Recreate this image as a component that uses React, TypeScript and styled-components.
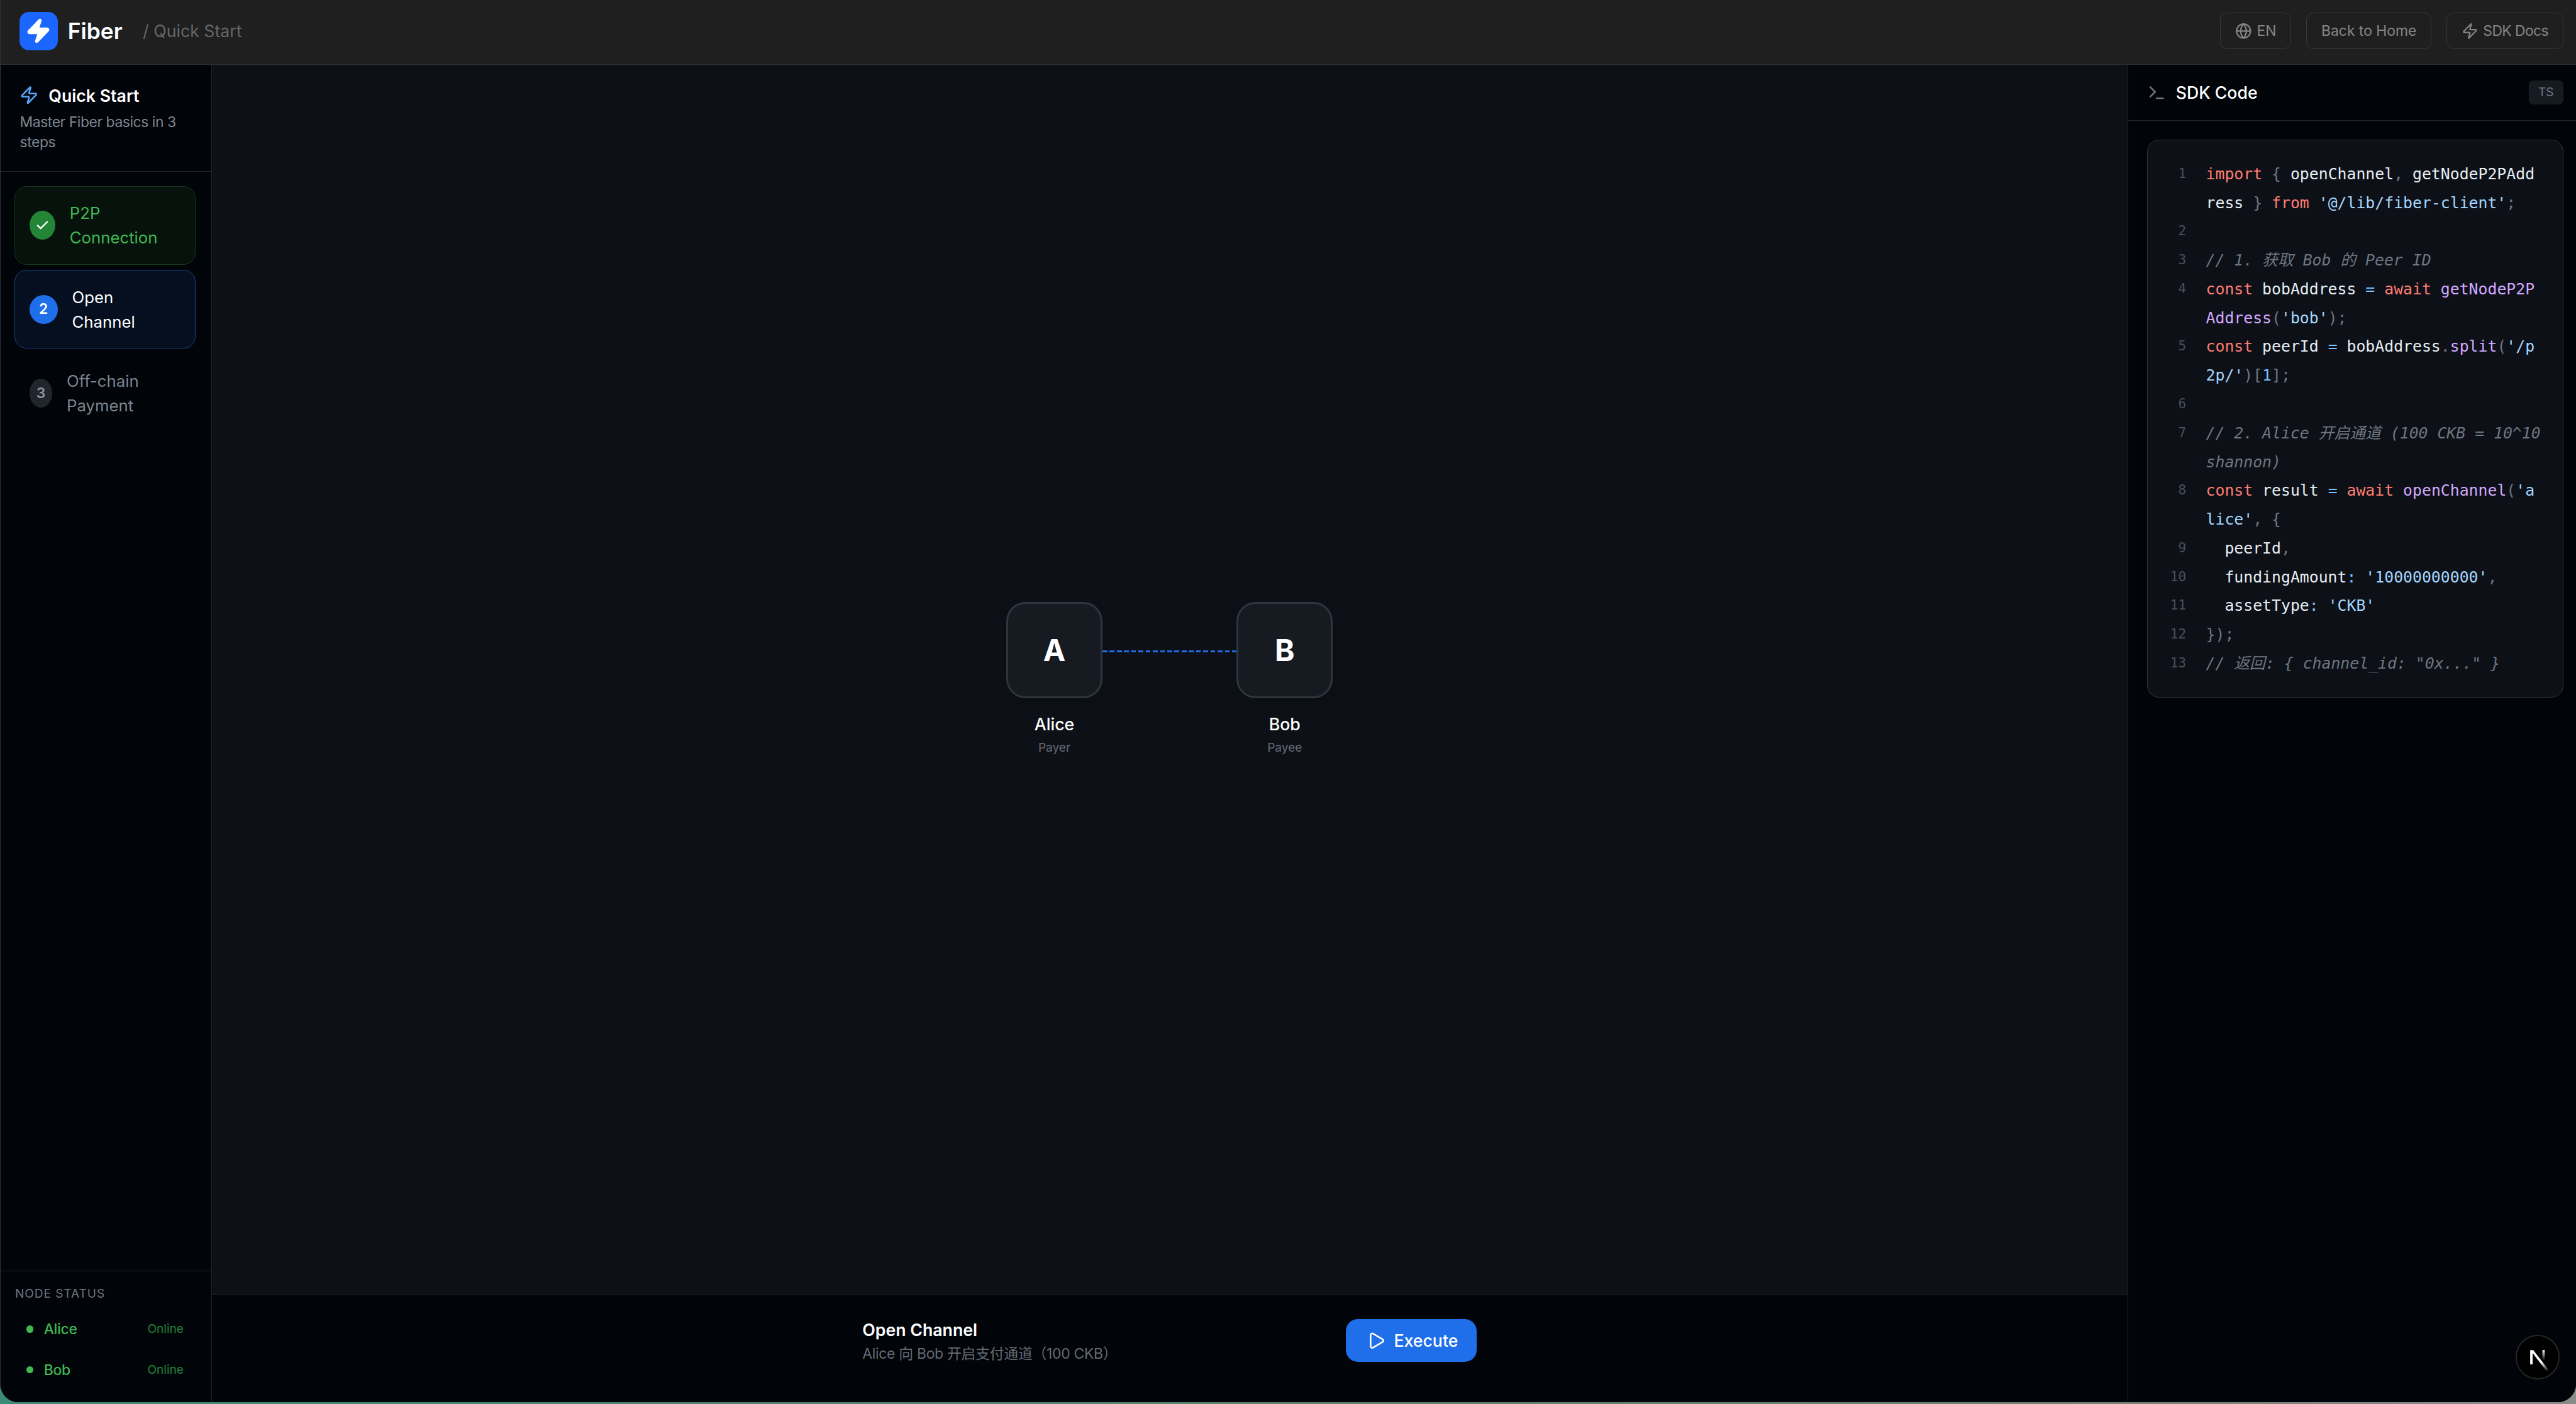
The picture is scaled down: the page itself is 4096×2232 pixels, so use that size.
import React from 'react';
import styled, { createGlobalStyle } from 'styled-components';
import { Check, Globe, Play, Terminal, Zap } from 'lucide-react';

const Global = createGlobalStyle`
  html, body { margin: 0; padding: 0; background: #3f7f70; overflow: hidden; }
  * { box-sizing: border-box; }
`;

const Page = styled.div`
  width: 4294px;
  height: 2340px;
  zoom: 0.95390;
  font-family: Inter, "Noto Sans CJK SC", sans-serif;
  background: linear-gradient(90deg, #3d8a78 0%, #4d8272 25%, #5e806c 55%, #6d7f72 80%, #8b8b88 100%);
`;
const Frame = styled.div`
  position: relative;
  height: 2337px;
  display: flex;
  flex-direction: column;
  overflow: hidden;
  border-left: 1px solid #30343a;
  border-radius: 0 0 30px 30px;
  background: #010409;
`;
const Header = styled.header`
  flex: none;
  height: 108px;
  display: flex;
  align-items: center;
  justify-content: space-between;
  padding: 0 21px 4px 31px;
  background: #1f1f1f;
  border-bottom: 2px solid #2f2f2f;
`;
const Brand = styled.div`
  display: flex;
  align-items: center;
`;
const Logo = styled.div`
  width: 64px;
  height: 64px;
  border-radius: 16px;
  background: #1a66ff;
  color: #fff;
  display: flex;
  align-items: center;
  justify-content: center;
`;
const BrandName = styled.span`
  margin-left: 17px;
  font-size: 37px;
  font-weight: 600;
  color: #fff;
`;
const Crumb = styled.span`
  margin-left: 34px;
  font-size: 28px;
  color: #666;
`;
const HeaderActions = styled.div`
  display: flex;
  gap: 25px;
`;
const HeaderButton = styled.div<{ $tight?: boolean }>`
  height: 60px;
  padding: 0 24px;
  display: flex;
  align-items: center;
  gap: 8px;
  border: 2px solid #383838;
  border-radius: 12px;
  color: #858585;
  font-size: 24px;
  letter-spacing: ${(p) => (p.$tight ? '-0.6px' : '0')};
`;
const Body = styled.div`
  flex: 1;
  min-height: 0;
  display: flex;
`;
const Sidebar = styled.aside`
  flex: none;
  width: 352px;
  display: flex;
  flex-direction: column;
  background: #010409;
  border-right: 2px solid #21262d;
`;
const SidebarHead = styled.div`
  height: 178px;
  padding: 31px 32px 0;
  border-bottom: 2px solid #21262d;
`;
const SidebarTitle = styled.div`
  display: flex;
  align-items: center;
  gap: 17px;
  height: 40px;
  margin-left: -1px;
  color: #fff;
  font-size: 28px;
  font-weight: 600;
  svg { color: #58a6ff; }
`;
const SidebarSub = styled.p`
  margin: 9px 0 0;
  font-size: 24px;
  line-height: 33px;
  letter-spacing: -0.45px;
  color: #7d8590;
`;
const Steps = styled.div`
  flex: 1;
  padding: 24px 26px 0 23px;
  display: flex;
  flex-direction: column;
  gap: 9px;
`;
const tones = {
  done: { bg: '#07120d', line: '#14361c', text: '#3fb950', dot: '#238636', num: '#fff' },
  active: { bg: '#050f20', line: '#1a4488', text: '#ffffff', dot: '#1f6feb', num: '#fff' },
  idle: { bg: 'transparent', line: 'transparent', text: '#7d8590', dot: '#21262d', num: '#8b949e' },
};
type Tone = keyof typeof tones;
const Step = styled.div<{ $tone: Tone }>`
  height: 131px;
  padding: 0 24px;
  display: flex;
  align-items: center;
  gap: 24px;
  border: 2px solid ${(p) => tones[p.$tone].line};
  border-radius: 20px;
  background: ${(p) => tones[p.$tone].bg};
  color: ${(p) => tones[p.$tone].text};
  font-size: 27px;
  line-height: 41px;
`;
const StepDot = styled.div<{ $tone: Tone; $width: number }>`
  flex: none;
  width: ${(p) => p.$width}px;
  height: 48px;
  border-radius: 50%;
  display: flex;
  align-items: center;
  justify-content: center;
  background: ${(p) => tones[p.$tone].dot};
  color: ${(p) => tones[p.$tone].num};
  font-size: 24px;
  font-weight: 600;
`;
const StepLabel = styled.div`
  width: 170px;
`;
const NodeStatus = styled.div`
  flex: none;
  height: 219px;
  padding: 26px 46px 0 24px;
  border-top: 2px solid #21262d;
`;
const StatusTitle = styled.div`
  font-size: 20px;
  line-height: 24px;
  letter-spacing: 1px;
  color: #6e7681;
  margin-bottom: 12px;
`;
const StatusRow = styled.div`
  height: 68px;
  padding-left: 19px;
  display: flex;
  align-items: center;
  color: #3fb950;
  font-size: 24px;
  font-weight: 500;
  letter-spacing: -0.3px;
`;
const StatusDot = styled.span`
  width: 12px;
  height: 12px;
  margin-right: 17px;
  border-radius: 50%;
  background: #3fb950;
`;
const StatusState = styled.span`
  margin-left: auto;
  font-size: 20px;
  font-weight: 400;
  letter-spacing: 0;
  color: #238636;
`;
const Main = styled.main`
  flex: 1;
  min-width: 0;
  display: flex;
  flex-direction: column;
`;
const Canvas = styled.div`
  flex: 1;
  display: flex;
  align-items: center;
  justify-content: center;
  background: #0d1117;
`;
const NodeGraph = styled.div`
  display: flex;
  align-items: flex-start;
`;
const NodeColumn = styled.div`
  width: 160px;
  display: flex;
  flex-direction: column;
  align-items: center;
`;
const NodeBox = styled.div`
  width: 160px;
  height: 160px;
  display: flex;
  align-items: center;
  justify-content: center;
  background: #161b22;
  border: 4px solid #30363d;
  border-radius: 32px;
  box-shadow: 0 8px 20px rgba(0, 0, 0, 0.12);
  color: #fff;
  font-size: 50px;
  font-weight: 700;
`;
const NodeName = styled.div`
  margin-top: 25px;
  font-size: 28px;
  line-height: 36px;
  font-weight: 500;
  color: #fff;
`;
const NodeRole = styled.div`
  margin-top: 8px;
  font-size: 20px;
  line-height: 28px;
  color: #646b75;
`;
const Link = styled.div`
  width: 224px;
  height: 4px;
  margin-top: 80px;
  background: repeating-linear-gradient(90deg, #1f6feb 0 8px, transparent 8px 12px);
`;
const ActionBar = styled.div`
  flex: none;
  height: 181px;
  padding-top: 39px;
  display: flex;
  align-items: flex-start;
  justify-content: center;
  background: #010409;
  border-top: 2px solid #21262d;
`;
const ActionInner = styled.div`
  width: 1024px;
  display: flex;
  align-items: center;
  justify-content: space-between;
`;
const ActionTitle = styled.div`
  font-size: 28px;
  line-height: 40px;
  font-weight: 600;
  color: #fff;
`;
const ActionSub = styled.div`
  font-size: 24px;
  line-height: 32px;
  margin-top: 4px;
  letter-spacing: -0.3px;
  color: #646b75;
`;
const Execute = styled.div`
  width: 218px;
  height: 72px;
  padding-left: 34px;
  display: flex;
  align-items: center;
  gap: 14px;
  border-radius: 20px;
  background: #1f6feb;
  color: #fff;
  font-size: 28px;
  font-weight: 500;
`;
const CodePanel = styled.aside`
  flex: none;
  width: 748px;
  display: flex;
  flex-direction: column;
  background: #010409;
  border-left: 2px solid #21262d;
`;
const CodeHead = styled.div`
  flex: none;
  height: 93px;
  padding: 0 21px 0 32px;
  display: flex;
  align-items: center;
  border-bottom: 2px solid #21262d;
  color: #fff;
  font-size: 28px;
  font-weight: 500;
  svg { color: #6e7681; margin-right: 16px; }
`;
const Badge = styled.div`
  margin-left: auto;
  width: 58px;
  height: 40px;
  display: flex;
  align-items: center;
  justify-content: center;
  border: 2px solid #21262d;
  border-radius: 8px;
  background: #161b22;
  color: #6e7681;
  font-size: 20px;
  font-weight: 400;
`;
const CodeCard = styled.div`
  margin: 32px 21px 0 32px;
  padding: 32px;
  background: #0d1117;
  border: 2px solid #30363d;
  border-radius: 20px;
  font-family: "DejaVu Sans Mono", "Noto Sans CJK SC", monospace;
  font-size: 26px;
  line-height: 48px;
`;
const CodeRow = styled.div`
  display: flex;
  min-height: 48px;
`;
const LineNo = styled.span`
  flex: none;
  width: 32px;
  margin-right: 33px;
  text-align: right;
  font-size: 22px;
  color: #484f58;
`;
const CodeText = styled.span`
  flex: 1;
  min-width: 0;
  white-space: pre-wrap;
  word-break: break-all;
  color: #e6edf3;
`;
const Kw = styled.span`color: #ff7b72;`;
const Str = styled.span`color: #a5d6ff;`;
const Fn = styled.span`color: #d2a8ff;`;
const Op = styled.span`color: #79c0ff;`;
const Pn = styled.span`color: #6e7681;`;
const Cm = styled.span`color: #6e7681; font-style: italic;`;
const DevBadge = styled.div`
  position: absolute;
  right: 27px;
  bottom: 38px;
  width: 74px;
  height: 74px;
  display: flex;
  align-items: center;
  justify-content: center;
  border-radius: 50%;
  background: #000;
  border: 3px solid #262626;
`;

const code: React.ReactNode[] = [
  <><Kw>import</Kw> <Pn>{'{'}</Pn> openChannel<Pn>,</Pn> getNodeP2PAddress <Pn>{'}'}</Pn> <Kw>from</Kw> <Str>'@/lib/fiber-client'</Str><Pn>;</Pn></>,
  '',
  <Cm>// 1. 获取 Bob 的 Peer ID</Cm>,
  <><Kw>const</Kw> bobAddress <Op>=</Op> <Kw>await</Kw> <Fn>getNodeP2PAddress</Fn><Pn>(</Pn><Str>'bob'</Str><Pn>);</Pn></>,
  <><Kw>const</Kw> peerId <Op>=</Op> bobAddress<Pn>.</Pn><Fn>split</Fn><Pn>(</Pn><Str>'/p2p/'</Str><Pn>)[</Pn><Op>1</Op><Pn>];</Pn></>,
  '',
  <Cm>// 2. Alice 开启通道 (100 CKB = 10^10 shannon)</Cm>,
  <><Kw>const</Kw> result <Op>=</Op> <Kw>await</Kw> <Fn>openChannel</Fn><Pn>(</Pn><Str>'alice'</Str><Pn>,</Pn> <Pn>{'{'}</Pn></>,
  <>  peerId<Pn>,</Pn></>,
  <>  fundingAmount<Op>:</Op> <Str>'10000000000'</Str><Pn>,</Pn></>,
  <>  assetType<Op>:</Op> <Str>'CKB'</Str></>,
  <Pn>{'});'}</Pn>,
  <Cm>{'// 返回: { channel_id: "0x..." }'}</Cm>,
];

export default function App() {
  return (
    <Page>
      <Global />
      <Frame>
        <Header>
          <Brand>
            <Logo><Zap size={44} fill="currentColor" strokeWidth={2} /></Logo>
            <BrandName>Fiber</BrandName>
            <Crumb>/ Quick Start</Crumb>
          </Brand>
          <HeaderActions>
            <HeaderButton><Globe size={28} strokeWidth={2} />EN</HeaderButton>
            <HeaderButton>Back to Home</HeaderButton>
            <HeaderButton $tight><Zap size={28} strokeWidth={2} />SDK Docs</HeaderButton>
          </HeaderActions>
        </Header>
        <Body>
          <Sidebar>
            <SidebarHead>
              <SidebarTitle><Zap size={32} strokeWidth={2} />Quick Start</SidebarTitle>
              <SidebarSub>Master Fiber basics in 3 steps</SidebarSub>
            </SidebarHead>
            <Steps>
              <Step $tone="done">
                <StepDot $tone="done" $width={43}><Check size={24} strokeWidth={2.5} /></StepDot>
                <StepLabel>P2P Connection</StepLabel>
              </Step>
              <Step $tone="active">
                <StepDot $tone="active" $width={47}>2</StepDot>
                <StepLabel>Open Channel</StepLabel>
              </Step>
              <Step $tone="idle">
                <StepDot $tone="idle" $width={38}>3</StepDot>
                <StepLabel>Off-chain Payment</StepLabel>
              </Step>
            </Steps>
            <NodeStatus>
              <StatusTitle>NODE STATUS</StatusTitle>
              <StatusRow><StatusDot />Alice<StatusState>Online</StatusState></StatusRow>
              <StatusRow><StatusDot />Bob<StatusState>Online</StatusState></StatusRow>
            </NodeStatus>
          </Sidebar>
          <Main>
            <Canvas>
              <NodeGraph>
                <NodeColumn>
                  <NodeBox>A</NodeBox>
                  <NodeName>Alice</NodeName>
                  <NodeRole>Payer</NodeRole>
                </NodeColumn>
                <Link />
                <NodeColumn>
                  <NodeBox>B</NodeBox>
                  <NodeName>Bob</NodeName>
                  <NodeRole>Payee</NodeRole>
                </NodeColumn>
              </NodeGraph>
            </Canvas>
            <ActionBar>
              <ActionInner>
                <div>
                  <ActionTitle>Open Channel</ActionTitle>
                  <ActionSub>Alice 向 Bob 开启支付通道（100 CKB）</ActionSub>
                </div>
                <Execute><Play size={32} strokeWidth={2} />Execute</Execute>
              </ActionInner>
            </ActionBar>
          </Main>
          <CodePanel>
            <CodeHead>
              <Terminal size={32} strokeWidth={2} />SDK Code
              <Badge>TS</Badge>
            </CodeHead>
            <CodeCard>
              {code.map((line, i) => (
                <CodeRow key={i}>
                  <LineNo>{i + 1}</LineNo>
                  <CodeText>{line}</CodeText>
                </CodeRow>
              ))}
            </CodeCard>
          </CodePanel>
        </Body>
        <DevBadge>
          <svg width="60" height="60" viewBox="0 0 180 180" fill="none">
            <defs>
              <linearGradient id="nA" x1="109" y1="116" x2="144" y2="160" gradientUnits="userSpaceOnUse">
                <stop stopColor="#fff" /><stop offset="1" stopColor="#fff" stopOpacity="0" />
              </linearGradient>
              <linearGradient id="nB" x1="121" y1="54" x2="120.8" y2="106" gradientUnits="userSpaceOnUse">
                <stop stopColor="#fff" /><stop offset="1" stopColor="#fff" stopOpacity="0" />
              </linearGradient>
            </defs>
            <path d="M149.508 157.52L69.142 54H54V125.97H66.114V69.384L139.999 164.845C143.333 162.614 146.509 160.165 149.508 157.52Z" fill="url(#nA)" />
            <rect x="115" y="54" width="12" height="72" fill="url(#nB)" />
          </svg>
        </DevBadge>
      </Frame>
    </Page>
  );
}
